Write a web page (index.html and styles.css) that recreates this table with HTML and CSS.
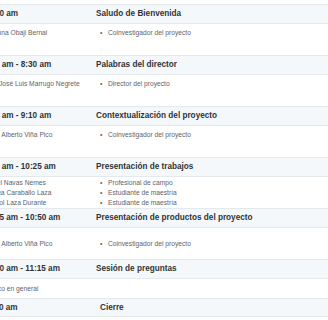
FILE: index.html
```html
<!DOCTYPE html>
<html lang="es">
<head>
<meta charset="utf-8">
<title>Agenda</title>
<link rel="stylesheet" href="styles.css">
</head>
<body>
<div class="schedule">
  <div class="row head"><div class="time">08:00 am</div><div class="title">Saludo de Bienvenida</div></div>
  <div class="row detail"><div class="names">Johanna Obaji Bernal</div><ul class="roles"><li>Coinvestigador del proyecto</li></ul></div>

  <div class="row head"><div class="time">8:10 am - 8:30 am</div><div class="title">Palabras del director</div></div>
  <div class="row detail"><div class="names">Prof. José Luis Marrugo Negrete</div><ul class="roles"><li>Director del proyecto</li></ul></div>

  <div class="row head"><div class="time">8:30 am - 9:10 am</div><div class="title">Contextualización del proyecto</div></div>
  <div class="row detail"><div class="names">Jorge Alberto Viña Pico</div><ul class="roles"><li>Coinvestigador del proyecto</li></ul></div>

  <div class="row head"><div class="time">9:10 am - 10:25 am</div><div class="title">Presentación de trabajos</div></div>
  <div class="row detail detail-center"><div class="names"><div>Daniel Navas Nemes</div><div>Andrea Caraballo Laza</div><div>Marisol Laza Durante</div></div><ul class="roles"><li>Profesional de campo</li><li>Estudiante de maestría</li><li>Estudiante de maestría</li></ul></div>

  <div class="row head"><div class="time">10:25 am - 10:50 am</div><div class="title">Presentación de productos del proyecto</div></div>
  <div class="row detail detail-center"><div class="names">Jorge Alberto Viña Pico</div><ul class="roles"><li>Coinvestigador del proyecto</li></ul></div>

  <div class="row head"><div class="time">10:50 am - 11:15 am</div><div class="title">Sesión de preguntas</div></div>
  <div class="row detail detail-short"><div class="names">Público en general</div><div class="roles"></div></div>

  <div class="row head last"><div class="time">11:30 am</div><div class="title title-indent">Cierre</div></div>
</div>
</body>
</html>
```
FILE: styles.css
```css
html, body {
  margin: 0;
  padding: 0;
  background: #ffffff;
  overflow: hidden;
}

body {
  font-family: "Liberation Sans", Arial, sans-serif;
}

.schedule {
  margin: 4px 0 0 -17px;
}

.row {
  display: grid;
  grid-template-columns: 113px 1fr;
  border-top: 1px solid #e4e9ee;
  box-sizing: border-box;
}

.head {
  height: 19px;
  align-items: center;
  background: #f4f8fb;
  font-weight: 700;
  font-size: 8.2px;
  line-height: 18px;
  color: #2f3338;
  white-space: nowrap;
}

.last {
  border-bottom: 1px solid #e4e9ee;
}

.title-indent {
  padding-left: 4px;
}

.detail {
  height: 32px;
  padding-top: 4px;
  align-items: start;
  font-size: 6.7px;
  line-height: 10px;
  color: #5e636a;
  white-space: nowrap;
}

.detail-center {
  padding-top: 0;
  align-items: center;
}

.detail-short {
  height: 20px;
  padding-top: 0;
  align-items: center;
}

.roles {
  margin: 0;
  padding: 0 0 0 4px;
  list-style: none;
}

.roles li {
  display: flex;
}

.roles li::before {
  content: "•";
  width: 8px;
  flex: none;
}
```
